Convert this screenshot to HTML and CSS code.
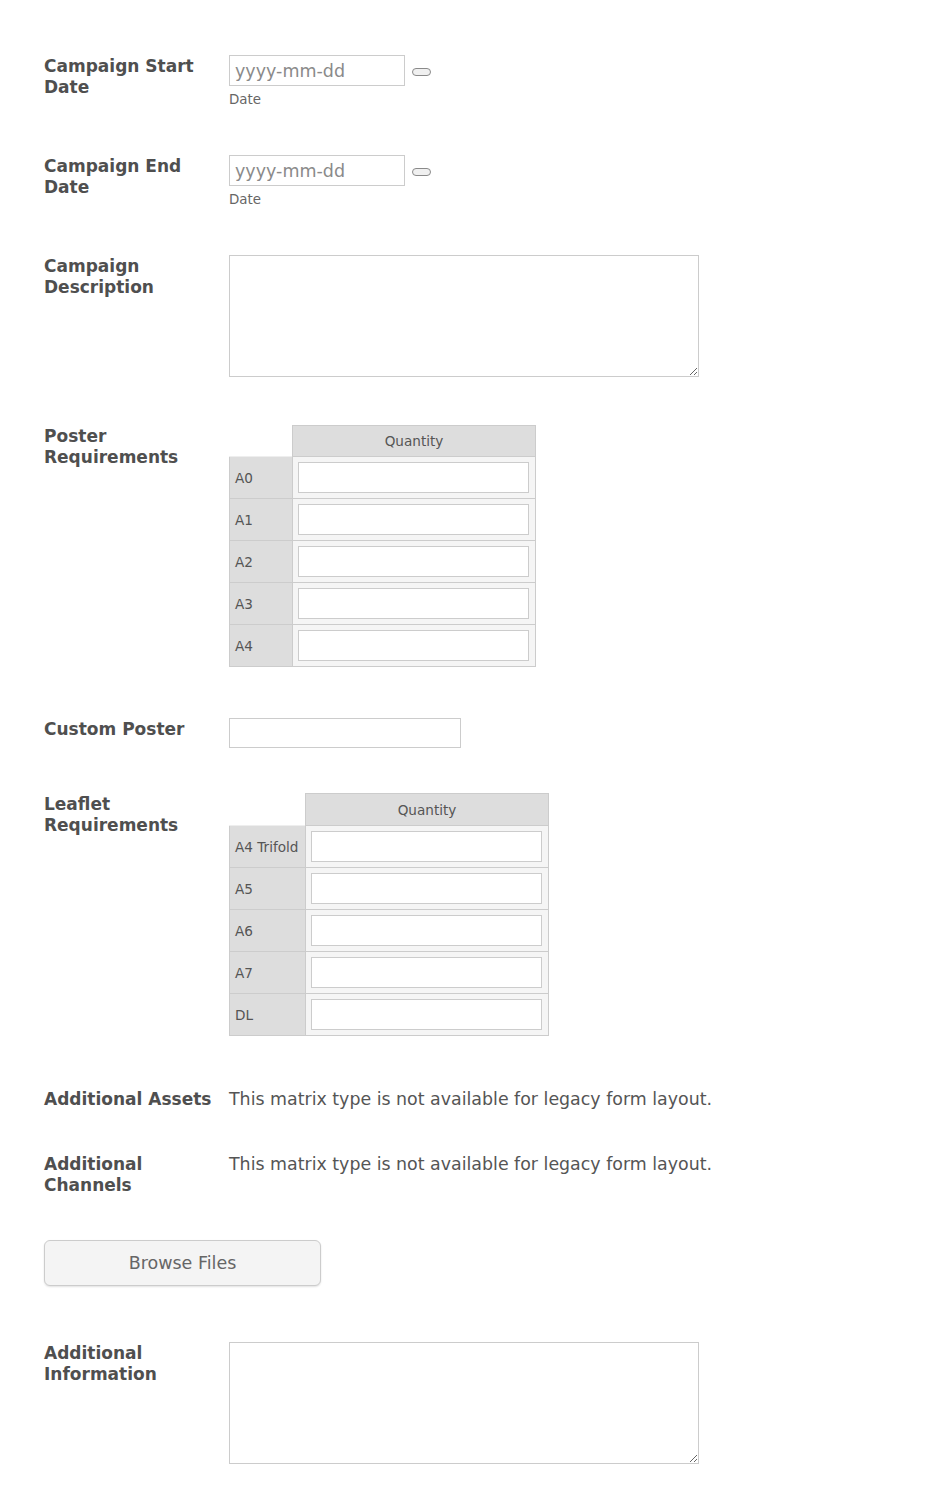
FILE: index.html
```html
<!DOCTYPE html>
<html>
<head>
<meta charset="utf-8">
<link rel="stylesheet" href="styles.css">
</head>
<body>
<form class="form">
  <div class="row gap46">
    <label class="label">Campaign Start Date</label>
    <div class="field">
      <div class="date-line">
        <input class="text date" type="text" placeholder="yyyy-mm-dd">
        <button class="pick" type="button"></button>
      </div>
      <span class="sub">Date</span>
    </div>
  </div>
  <div class="row gap46">
    <label class="label">Campaign End Date</label>
    <div class="field">
      <div class="date-line">
        <input class="text date" type="text" placeholder="yyyy-mm-dd">
        <button class="pick" type="button"></button>
      </div>
      <span class="sub">Date</span>
    </div>
  </div>
  <div class="row gap48">
    <label class="label">Campaign Description</label>
    <div class="field"><textarea class="area"></textarea></div>
  </div>
  <div class="row gap51">
    <label class="label">Poster Requirements</label>
    <div class="field">
      <table class="matrix poster">
        <tr><th class="corner"></th><th class="colhead">Quantity</th></tr>
        <tr><th class="rowhead">A0</th><td><input class="cell-input" type="text"></td></tr>
        <tr><th class="rowhead">A1</th><td><input class="cell-input" type="text"></td></tr>
        <tr><th class="rowhead">A2</th><td><input class="cell-input" type="text"></td></tr>
        <tr><th class="rowhead">A3</th><td><input class="cell-input" type="text"></td></tr>
        <tr><th class="rowhead">A4</th><td><input class="cell-input" type="text"></td></tr>
      </table>
    </div>
  </div>
  <div class="row gap45">
    <label class="label">Custom Poster</label>
    <div class="field"><input class="text custom" type="text"></div>
  </div>
  <div class="row gap52">
    <label class="label">Leaflet Requirements</label>
    <div class="field">
      <table class="matrix leaflet">
        <tr><th class="corner"></th><th class="colhead">Quantity</th></tr>
        <tr><th class="rowhead">A4 Trifold</th><td><input class="cell-input" type="text"></td></tr>
        <tr><th class="rowhead">A5</th><td><input class="cell-input" type="text"></td></tr>
        <tr><th class="rowhead">A6</th><td><input class="cell-input" type="text"></td></tr>
        <tr><th class="rowhead">A7</th><td><input class="cell-input" type="text"></td></tr>
        <tr><th class="rowhead">DL</th><td><input class="cell-input" type="text"></td></tr>
      </table>
    </div>
  </div>
  <div class="row gap43">
    <label class="label nowrap">Additional Assets</label>
    <div class="field"><p class="note">This matrix type is not available for legacy form layout.</p></div>
  </div>
  <div class="row gap44">
    <label class="label">Additional Channels</label>
    <div class="field"><p class="note">This matrix type is not available for legacy form layout.</p></div>
  </div>
  <div class="row gap56">
    <button class="browse" type="button">Browse Files</button>
  </div>
  <div class="row">
    <label class="label">Additional Information</label>
    <div class="field"><textarea class="area"></textarea></div>
  </div>
</form>
</body>
</html>
```

FILE: styles.css
```css
* { box-sizing: border-box; }
body {
  margin: 0;
  background: #fff;
  font-family: "DejaVu Sans", Verdana, sans-serif;
  color: #555;
}
.form {
  display: flex;
  flex-direction: column;
  padding: 55px 0 0 44px;
}
.row {
  display: flex;
  align-items: flex-start;
}
.gap43 { margin-bottom: 43px; }
.gap44 { margin-bottom: 44px; }
.gap45 { margin-bottom: 45px; }
.gap46 { margin-bottom: 46px; }
.gap48 { margin-bottom: 48px; }
.gap51 { margin-bottom: 51px; }
.gap52 { margin-bottom: 52px; }
.gap56 { margin-bottom: 56px; }
.label {
  width: 185px;
  flex: none;
  padding-top: 1px;
  padding-right: 14px;
  font-weight: bold;
  font-size: 17px;
  line-height: 21px;
  color: #4f4f4f;
}
.label.nowrap { white-space: nowrap; padding-right: 0; }
.field {
  display: flex;
  flex-direction: column;
}
.date-line {
  display: flex;
  align-items: center;
}
.text {
  height: 31px;
  border: 1px solid #ccc;
  background: #fff;
  padding: 0 5px;
  font-family: "DejaVu Sans", Verdana, sans-serif;
  font-size: 17.5px;
  color: #555;
  outline: none;
}
.text::placeholder { color: #8a8a8a; }
.date { width: 176px; }
.pick {
  width: 19px;
  height: 8px;
  margin: 3px 0 0 7px;
  padding: 0;
  border: 1px solid #8a8a8a;
  border-radius: 4px;
  background: #f0f0f0;
}
.sub {
  margin-top: 5px;
  font-size: 13.4px;
  line-height: 18px;
  color: #666;
}
.area {
  width: 470px;
  height: 122px;
  border: 1px solid #ccc;
  background: #fff;
  resize: vertical;
  display: block;
}
.custom { width: 232px; height: 30px; }
.matrix {
  border-collapse: collapse;
  font-size: 13.6px;
  color: #555;
}
.matrix th, .matrix td { padding: 0; }
.corner { background: transparent; border: none; }
.colhead {
  height: 31px;
  background: #ddd;
  border: 1px solid #ccc;
  font-weight: normal;
  text-align: center;
}
.leaflet .colhead { height: 32px; }
.rowhead {
  height: 42px;
  background: #ddd;
  border: 1px solid #ccc;
  border-top-color: #eee;
  font-weight: normal;
  text-align: left;
  padding: 0 5px !important;
  white-space: nowrap;
}
.matrix td {
  width: 243px;
  background: #f5f5f5;
  border: 1px solid #ccc;
  border-top-color: #e8e8e8;
  padding: 0 5px !important;
}
.poster .rowhead { width: 63px; }
.leaflet .rowhead { width: 76px; }
.cell-input {
  display: block;
  width: 231px;
  height: 31px;
  border: 1px solid #ccc;
  background: #fff;
}
.note {
  margin: 0;
  padding-top: 1px;
  font-size: 17.4px;
  line-height: 21px;
  color: #555;
}
.browse {
  width: 277px;
  height: 46px;
  border: 1px solid #ccc;
  border-radius: 6px;
  background: #f4f4f4;
  box-shadow: 0 1px 2px rgba(0,0,0,0.12);
  font-family: "DejaVu Sans", Verdana, sans-serif;
  font-size: 17.5px;
  color: #666;
}
```
